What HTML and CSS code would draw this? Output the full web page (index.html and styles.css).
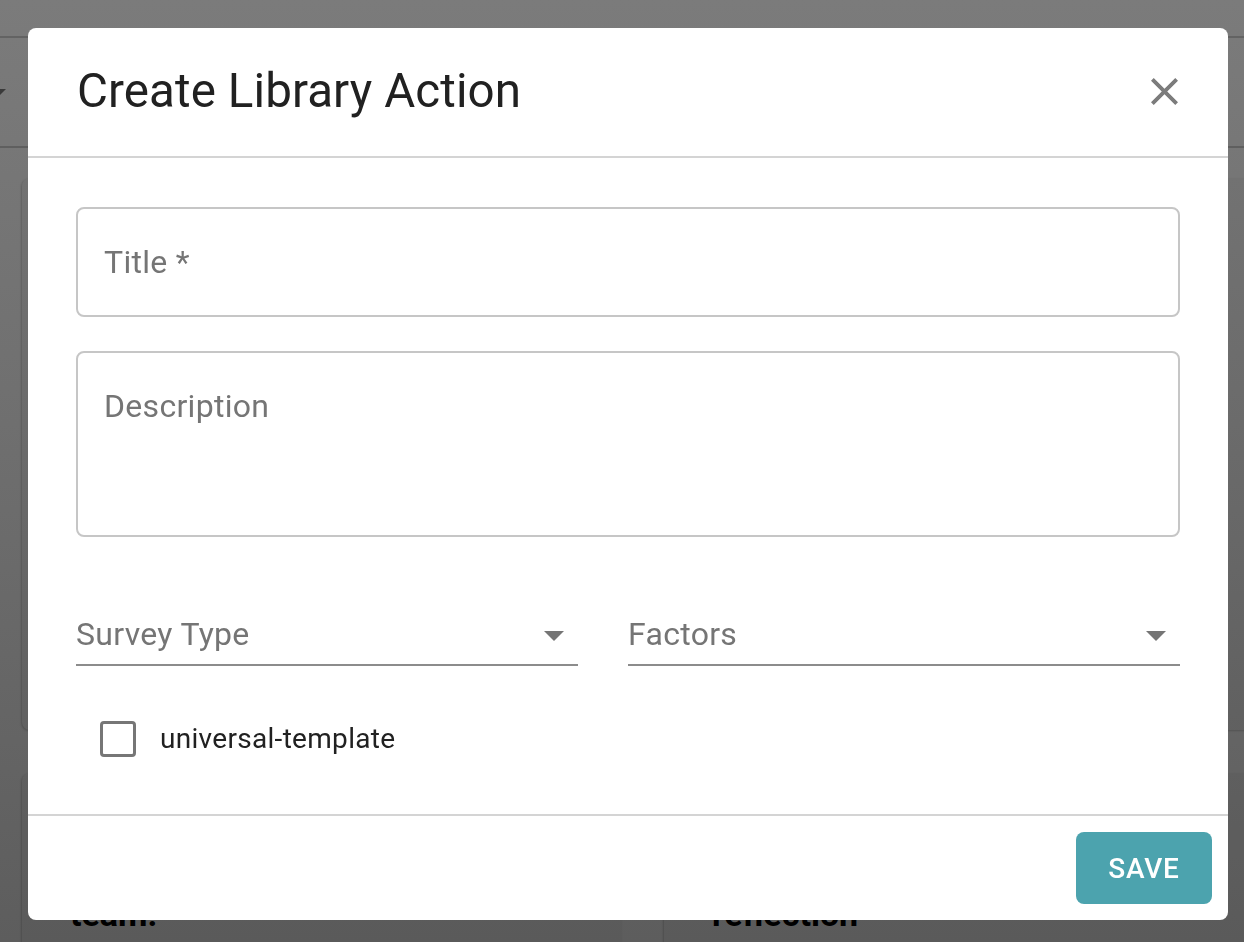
FILE: index.html
```html
<!DOCTYPE html>
<html lang="en">
<head>
<meta charset="utf-8">
<title>Create Library Action</title>
<link rel="stylesheet" href="styles.css">
</head>
<body>
<div class="page">
  <div class="topbar"></div>
  <div class="toolbar"><span class="tb-caret"></span></div>
  <div class="grid">
    <div class="card tall"></div>
    <div class="card tall"></div>
    <div class="card short"><h3 class="card-title">team.</h3></div>
    <div class="card short"><h3 class="card-title">reflection</h3></div>
  </div>
</div>

<div class="overlay">
  <div class="modal" role="dialog" aria-labelledby="dlg-title">
    <div class="modal-header">
      <h2 id="dlg-title" class="modal-title">Create Library Action</h2>
      <button class="close-btn" aria-label="Close">
        <svg viewBox="5 5 14 14" width="27" height="27"><path d="M19 6.41L17.59 5 12 10.59 6.41 5 5 6.41 10.59 12 5 17.59 6.41 19 12 13.41 17.59 19 19 17.59 13.41 12z"/></svg>
      </button>
    </div>
    <div class="modal-body">
      <div class="outlined title-field"><span class="field-label">Title *</span></div>
      <div class="outlined desc-field"><span class="field-label">Description</span></div>
      <div class="select-row">
        <div class="select survey">
          <span class="select-label">Survey Type</span>
          <svg class="caret" viewBox="7 10 10 5" width="20" height="10"><path d="M7 10l5 5 5-5z"/></svg>
        </div>
        <div class="select factors">
          <span class="select-label">Factors</span>
          <svg class="caret" viewBox="7 10 10 5" width="20" height="10"><path d="M7 10l5 5 5-5z"/></svg>
        </div>
      </div>
      <label class="check-row">
        <span class="checkbox"></span>
        <span class="check-label">universal-template</span>
      </label>
    </div>
    <div class="modal-footer">
      <button class="save-btn">SAVE</button>
    </div>
  </div>
</div>
</body>
</html>
```

FILE: styles.css
```css
* { box-sizing: border-box; }

html, body {
  margin: 0;
  padding: 0;
  height: 100%;
}

body {
  font-family: Roboto, "Liberation Sans", Arial, sans-serif;
  background: linear-gradient(180deg, #7b7b7b 0%, #6f6f6f 45%, #5d5d5d 100%);
  overflow: hidden;
}

/* ---------- dimmed background page ---------- */
.page {
  height: 942px;
}

.topbar {
  height: 38px;
  border-bottom: 2px solid #636363;
}

.toolbar {
  height: 110px;
  border-bottom: 2px solid #5f5f5f;
  display: flex;
  align-items: center;
}

.tb-caret {
  width: 0;
  height: 0;
  margin-left: -6px;
  border-left: 6px solid transparent;
  border-right: 6px solid transparent;
  border-top: 6px solid #3a3a3a;
}

.grid {
  display: grid;
  grid-template-columns: 600px 600px;
  grid-template-rows: 552px 200px;
  column-gap: 42px;
  row-gap: 43px;
  padding: 30px 0 0 22px;
}

.card {
  background: rgba(0, 0, 0, 0.03);
  border-radius: 8px;
  box-shadow: -1px 1px 2px rgba(0, 0, 0, 0.18);
}

.card-title {
  margin: 0;
  padding: 121px 0 0 48px;
  font-size: 34px;
  font-weight: 700;
  line-height: 40px;
  color: #000;
}

/* ---------- modal ---------- */
.overlay {
  position: fixed;
  inset: 0;
  padding: 28px 16px 22px 28px;
}

.modal {
  width: 1200px;
  height: 892px;
  background: #fff;
  border-radius: 8px;
  display: flex;
  flex-direction: column;
  overflow: hidden;
}

.modal-header {
  height: 130px;
  flex: none;
  display: flex;
  align-items: center;
  justify-content: space-between;
  padding: 0 48px 2px 49px;
  border-bottom: 2px solid #d4d4d4;
}

.modal-title {
  margin: 0;
  font-size: 47.5px;
  font-weight: 400;
  color: #212121;
  letter-spacing: 0.1px;
}

.close-btn {
  border: 0;
  background: none;
  padding: 0;
  width: 27px;
  height: 27px;
  margin-right: 2px;
  display: flex;
}

.close-btn svg { fill: #7c7c7c; }

.modal-body {
  flex: 1;
  padding: 49px 48px 0 48px;
  display: flex;
  flex-direction: column;
}

.outlined {
  border: 2px solid #c6c6c6;
  border-radius: 8px;
  padding: 35px 26px 0;
}

.title-field { height: 110px; }

.desc-field {
  height: 186px;
  margin-top: 34px;
}

.field-label {
  display: block;
  font-size: 32px;
  line-height: 36px;
  color: #757575;
  letter-spacing: 0.3px;
}

.select-row {
  display: flex;
  gap: 50px;
  margin-top: 73px;
}

.select {
  height: 56px;
  border-bottom: 2px solid #8c8c8c;
  display: flex;
  align-items: center;
  justify-content: space-between;
  padding: 0 14px 6px 0;
}

.survey { width: 502px; flex: none; }
.factors { flex: 1; }

.select-label {
  font-size: 32px;
  line-height: 40px;
  color: #757575;
  letter-spacing: 0.3px;
}

.caret { fill: #757575; margin-top: 4px; }

.check-row {
  display: flex;
  align-items: center;
  height: 78px;
  margin-top: 33px;
  padding-left: 24px;
  gap: 24px;
}

.checkbox {
  width: 36px;
  height: 36px;
  border: 3.5px solid #767676;
  border-radius: 4px;
  flex: none;
  margin-top: 2px;
}

.check-label {
  font-size: 28px;
  color: #212121;
  letter-spacing: 0.3px;
}

.modal-footer {
  flex: none;
  height: 106px;
  border-top: 2px solid #d4d4d4;
  display: flex;
  justify-content: flex-end;
  align-items: center;
  padding: 0 16px;
}

.save-btn {
  width: 136px;
  height: 72px;
  border: 0;
  border-radius: 8px;
  background: #4ca3ae;
  color: #fff;
  font-family: Roboto, "Liberation Sans", Arial, sans-serif;
  font-size: 28px;
  font-weight: 500;
  letter-spacing: 0.8px;
}
```
